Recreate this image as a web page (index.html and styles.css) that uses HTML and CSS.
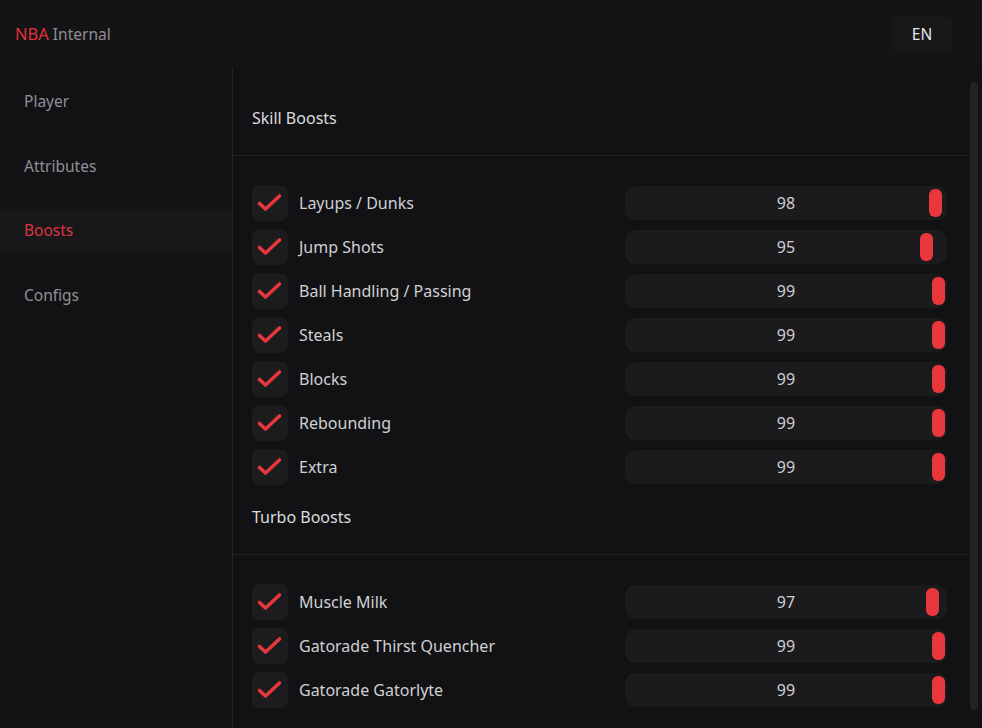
FILE: index.html
```html
<!DOCTYPE html>
<html>
<head>
<meta charset="utf-8">
<link rel="stylesheet" href="styles.css">
</head>
<body>
<div class="app">
  <header class="topbar">
    <div class="logo"><span class="logo-nba">NBA</span> <span class="logo-sub">Internal</span></div>
    <button class="lang">EN</button>
  </header>
  <div class="body">
    <nav class="sidebar">
      <div class="nav-item">Player</div>
      <div class="nav-item">Attributes</div>
      <div class="nav-item active">Boosts</div>
      <div class="nav-item">Configs</div>
    </nav>
    <main class="main">
      <section class="section first">
        <div class="section-title">Skill Boosts</div>
        <div class="rows">
          <div class="row"><span class="check"><svg viewBox="0 0 36 36"><path d="M7.5 18.5 L13.5 24 L27.5 11"/></svg></span><span class="label">Layups / Dunks</span><div class="track"><span class="val">98</span><span class="thumb" style="left:304px"></span></div></div>
          <div class="row"><span class="check"><svg viewBox="0 0 36 36"><path d="M7.5 18.5 L13.5 24 L27.5 11"/></svg></span><span class="label">Jump Shots</span><div class="track"><span class="val">95</span><span class="thumb" style="left:295px"></span></div></div>
          <div class="row"><span class="check"><svg viewBox="0 0 36 36"><path d="M7.5 18.5 L13.5 24 L27.5 11"/></svg></span><span class="label">Ball Handling / Passing</span><div class="track"><span class="val">99</span><span class="thumb" style="left:307px"></span></div></div>
          <div class="row"><span class="check"><svg viewBox="0 0 36 36"><path d="M7.5 18.5 L13.5 24 L27.5 11"/></svg></span><span class="label">Steals</span><div class="track"><span class="val">99</span><span class="thumb" style="left:307px"></span></div></div>
          <div class="row"><span class="check"><svg viewBox="0 0 36 36"><path d="M7.5 18.5 L13.5 24 L27.5 11"/></svg></span><span class="label">Blocks</span><div class="track"><span class="val">99</span><span class="thumb" style="left:307px"></span></div></div>
          <div class="row"><span class="check"><svg viewBox="0 0 36 36"><path d="M7.5 18.5 L13.5 24 L27.5 11"/></svg></span><span class="label">Rebounding</span><div class="track"><span class="val">99</span><span class="thumb" style="left:307px"></span></div></div>
          <div class="row"><span class="check"><svg viewBox="0 0 36 36"><path d="M7.5 18.5 L13.5 24 L27.5 11"/></svg></span><span class="label">Extra</span><div class="track"><span class="val">99</span><span class="thumb" style="left:307px"></span></div></div>
        </div>
      </section>
      <section class="section">
        <div class="section-title">Turbo Boosts</div>
        <div class="rows">
          <div class="row"><span class="check"><svg viewBox="0 0 36 36"><path d="M7.5 18.5 L13.5 24 L27.5 11"/></svg></span><span class="label">Muscle Milk</span><div class="track"><span class="val">97</span><span class="thumb" style="left:301px"></span></div></div>
          <div class="row"><span class="check"><svg viewBox="0 0 36 36"><path d="M7.5 18.5 L13.5 24 L27.5 11"/></svg></span><span class="label">Gatorade Thirst Quencher</span><div class="track"><span class="val">99</span><span class="thumb" style="left:307px"></span></div></div>
          <div class="row"><span class="check"><svg viewBox="0 0 36 36"><path d="M7.5 18.5 L13.5 24 L27.5 11"/></svg></span><span class="label">Gatorade Gatorlyte</span><div class="track"><span class="val">99</span><span class="thumb" style="left:307px"></span></div></div>
        </div>
      </section>
      <div class="scrollbar"></div>
    </main>
  </div>
</div>
</body>
</html>
```

FILE: styles.css
```css
* { box-sizing: border-box; }
html, body { margin: 0; padding: 0; }
body {
  width: 982px;
  height: 728px;
  overflow: hidden;
  background: #121215;
  font-family: "Noto Sans", "Open Sans", sans-serif;
  font-size: 16px;
  color: #d2d2d5;
}
.app { display: flex; flex-direction: column; height: 728px; }
.topbar {
  height: 67px;
  flex: none;
  background: #141417;
  display: flex;
  align-items: center;
  justify-content: space-between;
  padding: 0 30px 0 15px;
}
.logo { font-size: 15.5px; }
.logo-nba { color: #e0323a; font-size: 16.5px; }
.logo-sub { color: #8e8e93; }
.lang {
  width: 60px;
  height: 34px;
  border: none;
  border-radius: 6px;
  background: #18181b;
  color: #e4e4e6;
  font-family: inherit;
  font-size: 15.5px;
  margin-top: 0;
}
.body { flex: 1; display: flex; min-height: 0; }
.sidebar {
  width: 233px;
  flex: none;
  border-right: 1px solid #232326;
  padding-top: 13px;
  display: flex;
  flex-direction: column;
  gap: 22.5px;
  background: #121215;
  font-size: 15.5px;
}
.nav-item {
  height: 42px;
  display: flex;
  align-items: center;
  padding-left: 24px;
  color: #8f8f94;
}
.nav-item.active { background: #18181b; color: #dd3540; }
.main {
  flex: 1;
  position: relative;
  padding-top: 19px;
  padding-right: 14px;
}
.section-title {
  padding: 23px 0 27px 19px;
  line-height: 19px;
  color: #dcdcdf;
  border-bottom: 1px solid #232326;
}
.rows {
  padding: 29px 21px 0 19px;
  display: flex;
  flex-direction: column;
  gap: 8px;
}
.row { height: 36px; display: flex; align-items: center; }
.check {
  width: 36px;
  height: 36px;
  border-radius: 8px;
  background: #1c1c1f;
  flex: none;
  display: flex;
}
.check svg { width: 36px; height: 36px; }
.check path {
  fill: none;
  stroke: #e8363d;
  stroke-width: 3.6;
  stroke-linecap: round;
  stroke-linejoin: round;
}
.label { flex: 1; margin-left: 11px; color: #d0d0d3; }
.track {
  position: relative;
  width: 322px;
  height: 34px;
  border-radius: 10px;
  background: #1b1b1e;
  display: flex;
  align-items: center;
  justify-content: center;
}
.val { color: #cfcfd2; }
.thumb {
  position: absolute;
  top: 3px;
  width: 13px;
  height: 28px;
  border-radius: 6px;
  background: #e8383d;
}
.scrollbar {
  position: absolute;
  right: 4px;
  top: 15px;
  width: 8px;
  height: 628px;
  border-radius: 4px;
  background: #222225;
}
```
